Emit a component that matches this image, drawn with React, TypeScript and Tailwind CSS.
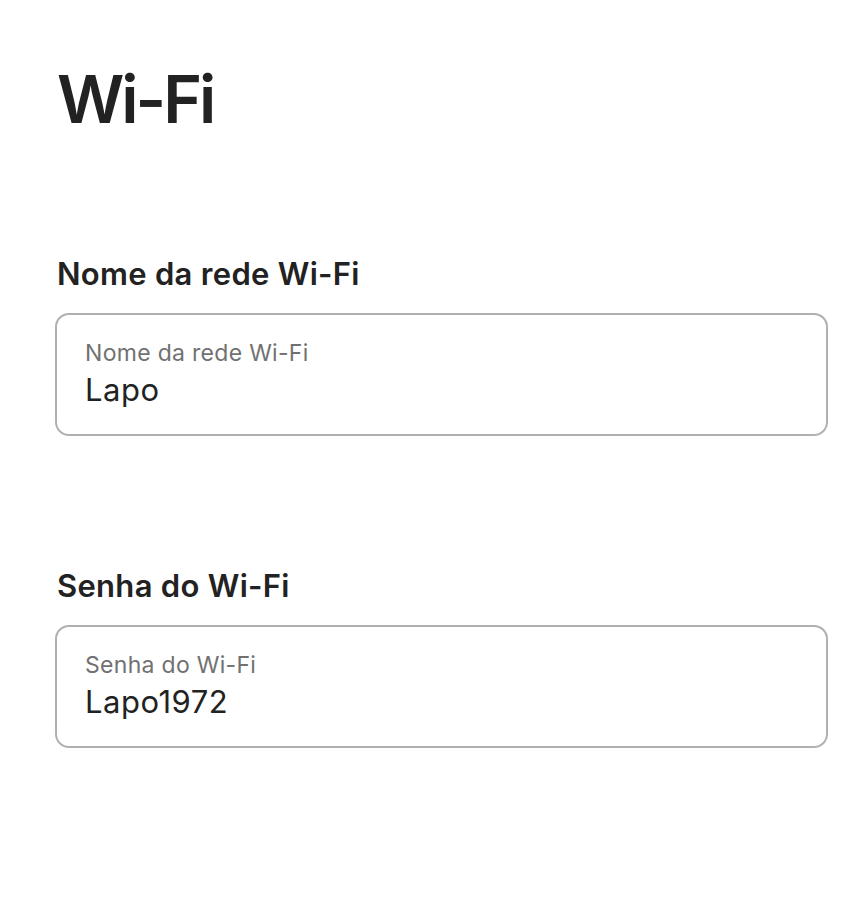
import React from "react";

function Field({ heading, label, value }: { heading: string; label: string; value: string }) {
  return (
    <div className="flex flex-col">
      <div className="text-[31px] leading-[36px] font-semibold text-[#222222] pl-[2px] tracking-[0.3px]">{heading}</div>
      <div className="mt-[21px] w-[773px] h-[123px] border-2 border-[#b0b0b0] rounded-[14px] pl-[28px] pt-[25px] flex flex-col">
        <div className="text-[23px] leading-[26px] text-[#717171] tracking-[0.3px]">{label}</div>
        <div className="mt-[5px] text-[31px] leading-[38px] text-[#222222] tracking-[0.5px]">{value}</div>
      </div>
    </div>
  );
}

export default function App() {
  return (
    <div className="w-[851px] h-[900px] bg-white px-[55px] pt-[59px]" style={{ fontFamily: "Inter, 'Noto Sans', sans-serif" }}>
      <h1 className="text-[66px] leading-[80px] font-semibold text-[#222222] pl-[2px] tracking-[-3px]">Wi-Fi</h1>
      <div className="mt-[117px] flex flex-col gap-[132px]">
        <Field heading="Nome da rede Wi-Fi" label="Nome da rede Wi-Fi" value="Lapo" />
        <Field heading="Senha do Wi-Fi" label="Senha do Wi-Fi" value="Lapo1972" />
      </div>
    </div>
  );
}
